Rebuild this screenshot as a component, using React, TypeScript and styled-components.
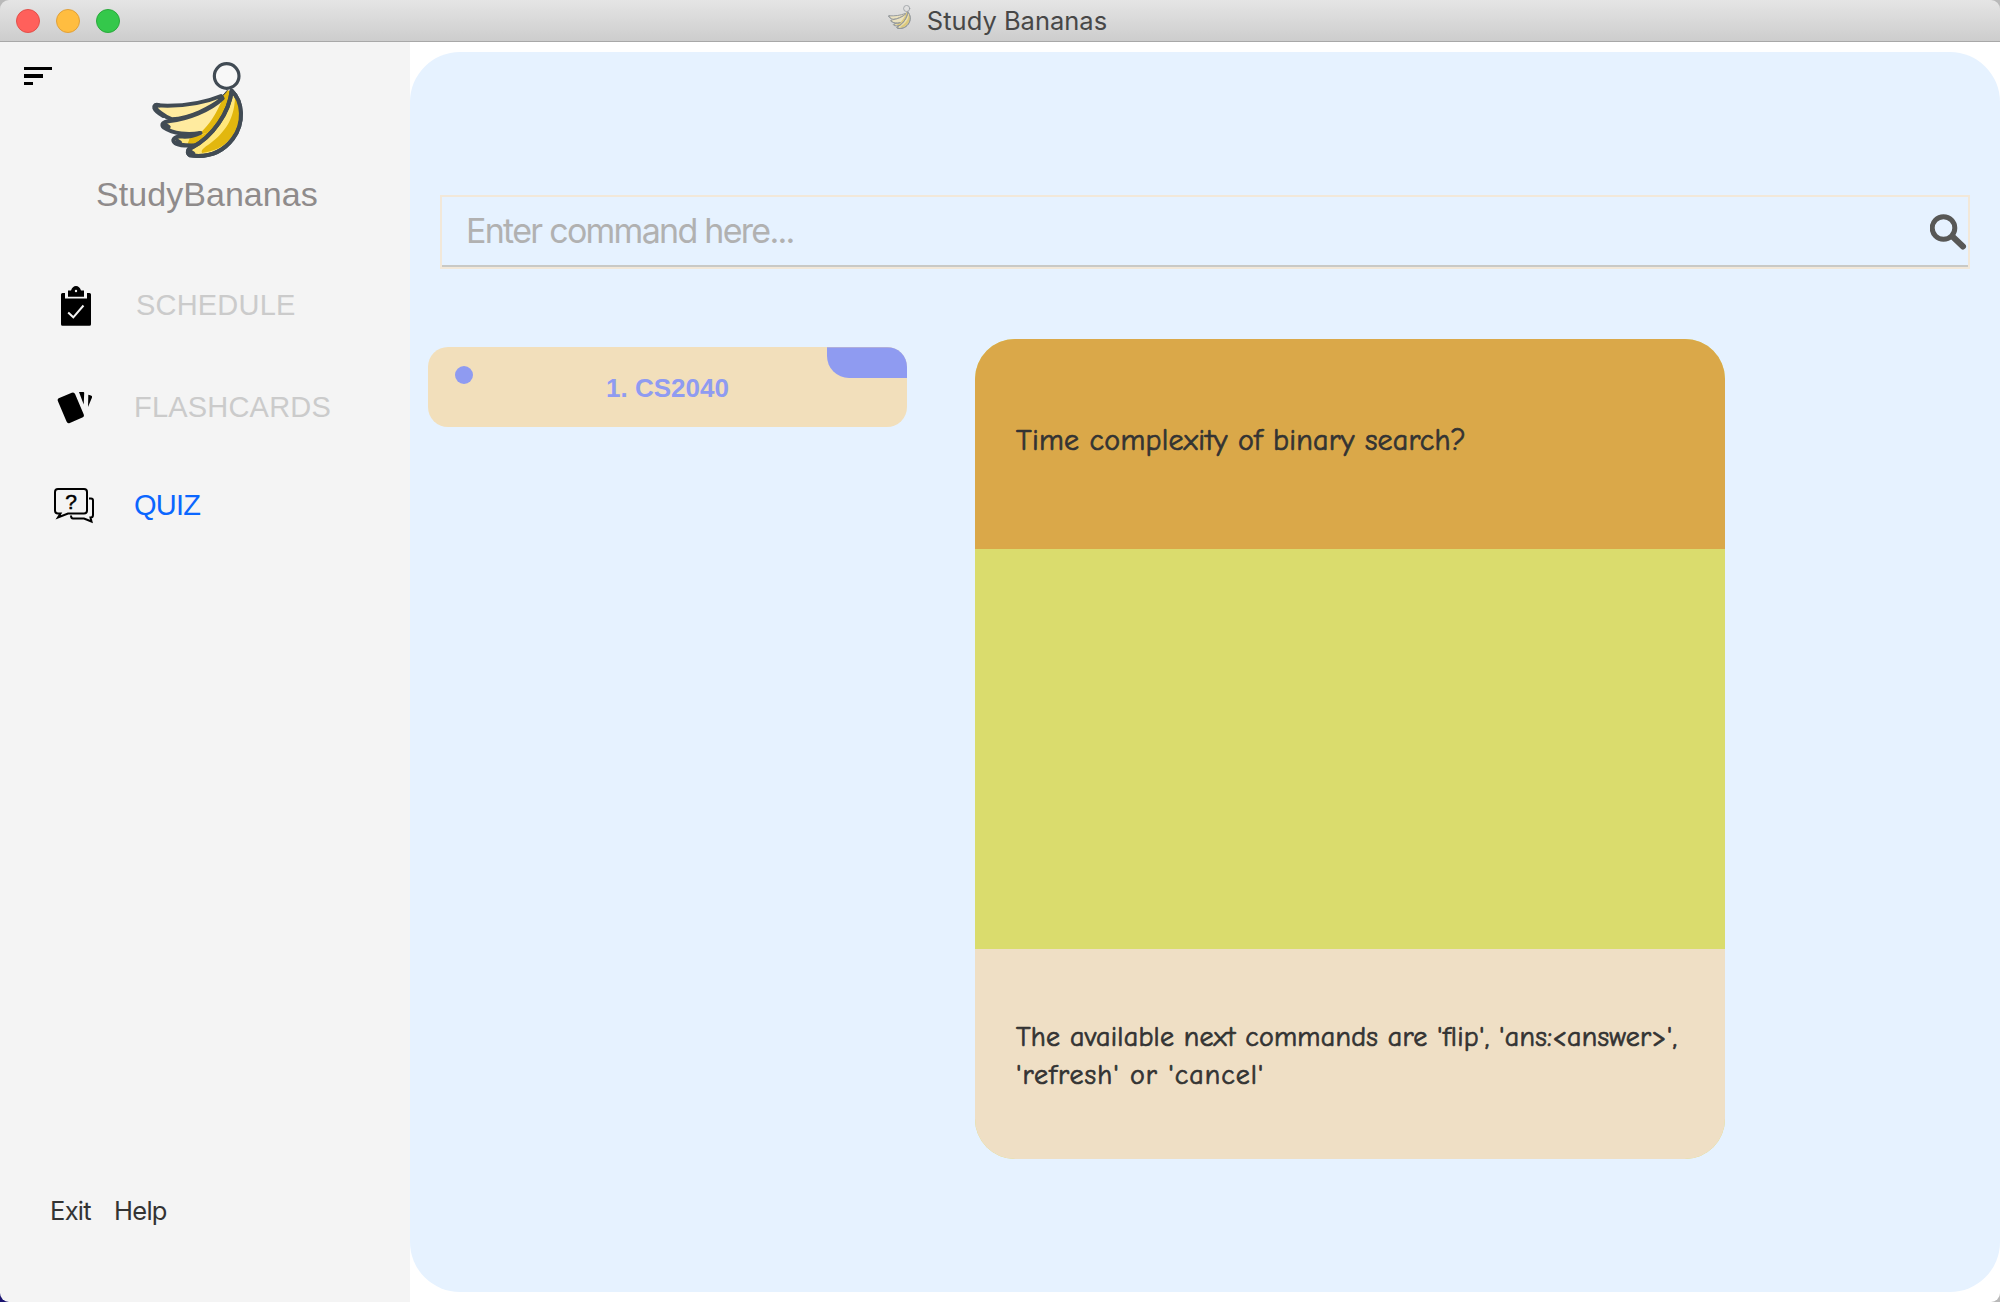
import React from 'react';
import styled, { createGlobalStyle } from 'styled-components';

const Global = createGlobalStyle`
  * { box-sizing: border-box; }
  body {
    margin: 0;
    background: linear-gradient(to top right, #1b1470 10%, #b9b9b9 20%);
    overflow: hidden;
  }
`;

const Window = styled.div`
  width: 2000px;
  height: 1302px;
  display: flex;
  flex-direction: column;
  overflow: hidden;
  border-radius: 9px;
  font-family: 'Liberation Sans', Arial, sans-serif;
`;

const TitleBar = styled.header`
  height: 42px;
  flex: none;
  display: grid;
  grid-template-columns: 1fr auto 1fr;
  align-items: center;
  background: linear-gradient(#e5e5e5, #cdcdcd);
  border-bottom: 1px solid #a8a8a8;
`;

const Lights = styled.div`
  display: flex;
  gap: 16px;
  padding-left: 16px;
`;

const Light = styled.span<{ $fill: string; $edge: string }>`
  width: 24px;
  height: 24px;
  border-radius: 50%;
  background: ${(p) => p.$fill};
  border: 1px solid ${(p) => p.$edge};
`;

const Title = styled.div`
  display: flex;
  align-items: flex-start;
  gap: 12px;
  height: 41px;
  padding: 2px 8px 0 0;
`;

const TitleText = styled.span`
  font: 400 25.5px/34px Inter, sans-serif;
  padding-top: 2px;
  color: #474747;
`;

const Body = styled.div`
  flex: 1;
  display: flex;
  min-height: 0;
`;

const Sidebar = styled.aside`
  width: 410px;
  background: #f4f4f4;
  display: flex;
  flex-direction: column;
`;

const Brand = styled.div`
  display: grid;
  grid-template-columns: 116px 1fr;
  align-items: start;
  padding: 8px 0 0 24px;
  height: 130px;
`;

const MenuIcon = styled.svg`
  margin-top: 17px;
`;

const BrandName = styled.h1`
  margin: 0;
  padding: 2px 0 0 96px;
  height: 42px;
  font-weight: 400;
  font-size: 34px;
  line-height: 40px;
  letter-spacing: 0.05px;
  color: #8f8b8b;
`;

const Nav = styled.nav`
  display: flex;
  flex-direction: column;
  padding: 70px 0 0 54px;
`;

const NavItem = styled.a<{ $active?: boolean; $height: number; $tracking: number; $indent?: number }>`
  height: ${(p) => p.$height}px;
  display: grid;
  grid-template-columns: ${(p) => 82 - (p.$indent ?? 0)}px 1fr;
  align-items: start;
  font-size: 29px;
  line-height: 43px;
  letter-spacing: ${(p) => p.$tracking}px;
  color: ${(p) => (p.$active ? '#0a66ff' : '#cbcbcb')};
  svg { display: block; }
`;

const NavIcon = styled.svg`
  width: 44px;
  height: 44px;
`;

const IconLabel = styled.text`
  font: 21px 'Liberation Sans', Arial, sans-serif;
  letter-spacing: 0;
`;

const Footer = styled.footer`
  margin-top: auto;
  display: flex;
  gap: 23px;
  padding: 0 0 74px 50px;
  font: 400 25.5px/34px Inter, sans-serif;
  letter-spacing: -0.7px;
  color: #333;
`;

const Content = styled.main`
  flex: 1;
  background: #fff;
  padding: 10px 0;
`;

const Panel = styled.section`
  height: 1240px;
  border-radius: 50px;
  background: #e6f2ff;
  padding-top: 143px;
`;

const SearchBox = styled.div`
  margin: 0 30px;
  height: 74px;
  border: 2px solid #f2e8d9;
  display: flex;
`;

const SearchField = styled.div`
  flex: 1;
  height: 70px;
  border-bottom: 2px solid #c8c9c6;
  display: flex;
  justify-content: space-between;
  padding-left: 24px;
`;

const Placeholder = styled.span`
  font: 400 34px/68px Inter, sans-serif;
  letter-spacing: -1.72px;
  color: #b1b1b1;
`;

const SearchIcon = styled.svg`
  margin: 17px 1px 0 0;
`;

const Columns = styled.div`
  display: flex;
  align-items: flex-start;
  padding: 70px 0 0 18px;
  gap: 68px;
`;

const SetCard = styled.div`
  position: relative;
  width: 479px;
  height: 80px;
  margin-top: 8px;
  border-radius: 20px;
  overflow: hidden;
  background: #f2dfbb;
  color: #8f9bf1;
  text-align: center;
  font-weight: 700;
  font-size: 26px;
  line-height: 82px;
`;

const Dot = styled.i`
  position: absolute;
  left: 27px;
  top: 19px;
  width: 18px;
  height: 18px;
  border-radius: 50%;
  background: #8f9bf1;
`;

const Tab = styled.i`
  position: absolute;
  right: 0;
  top: 0;
  width: 80px;
  height: 30.5px;
  border-radius: 0 0 0 22px;
  background: #8f9bf1;
  border-top: 1px solid #b0aedb;
`;

const FlashCard = styled.article`
  width: 750px;
  border-radius: 40px;
  overflow: hidden;
  background: #dadc6d;
`;

const CardPart = styled.div<{ $tone: string; $height: number; $top?: number }>`
  height: ${(p) => p.$height}px;
  background: ${(p) => p.$tone};
  padding: ${(p) => p.$top ?? 0}px 0 0 41px;
  display: flex;
  flex-direction: column;
  color: #333;
  white-space: nowrap;
  font-family: 'Comic Sans MS', 'Comic Neue', 'Open Sans', sans-serif;
  font-variant-ligatures: none;
  font-feature-settings: 'liga' 0, 'clig' 0, 'calt' 0, 'dlig' 0;
  -webkit-text-stroke: 0.7px #333;
`;

const Line = styled.span<{ $tracking: number; $size: number }>`
  font-size: ${(p) => p.$size}px;
  line-height: 38px;
  letter-spacing: ${(p) => p.$tracking}px;
`;

function Bananas({ size, faded }: { size: number; faded?: boolean }) {
  return (
    <svg width={size} height={size} viewBox="0 0 360 360" opacity={faded ? 0.45 : 1}
      stroke="#414b54" strokeWidth="12" strokeLinejoin="round" strokeLinecap="round">
      <circle cx="260" cy="78" r="37" fill={faded ? 'none' : '#fff'} fillOpacity="0.35" strokeWidth="9.500" />
      <path d="M262 121L242 142L182 158L150 276L205 266L255 190L276 124Z" fill="#e2b70e" stroke="none" />
      <path d="M49 166C120 170 190 160 243 138L248 145C210 175 150 205 96 208C70 199 50 180 44 170Z" fill="#ffeb9f" />
      <path d="M248 145C200 185 150 203 96 211C82 214 64 218 68 228C85 246 140 256 181 249L212 244C238 210 256 171 266 124Z" fill="#e2b70e" stroke="none" />
      <path d="M248 145C200 185 150 203 96 211C82 214 64 218 68 228C85 246 140 256 181 249C207 225 231 190 248 145Z" fill="#ffeb9f" stroke="none" />
      <path d="M248 145C210 182 140 208 90 213C69 215 61 224 72 233C100 252 145 255 181 249" fill="none" />
      <path d="M121 259C101 262 94 270 105 279C116 287 140 286 168 286C187 275 200 260 212 245C180 257 150 258 121 259Z" fill="#ffe77c" stroke="none" />
      <path d="M150 262L190 253L212 244L170 286L142 284Z" fill="#e2b70e" stroke="none" />
      <path d="M121 259C101 262 94 270 105 279C118 288 145 287 173 286M121 259C139 262 163 257 181 249" fill="none" />
      <path d="M275 122C309 155 314 220 278 267C246 309 200 323 150 316C140 310 142 296 155 293C220 260 268 185 275 122Z" fill="#ffe77c" />
      <path d="M285 140C303 175 304 219 277 259C250 295 220 304 186 309C182 300 192 296 198 289C245 257 284 215 285 140Z" fill="#e2b70e" stroke="none" />
      <path d="M275 122C309 155 314 220 278 267C246 309 200 323 150 316C140 310 142 296 155 293C220 260 268 185 275 122Z" fill="none" />
      <path d="M57 166C48 161 42 166 43 174C45 180 60 192 70 198M76 224L86 231M112 272L120 277M152 305L160 310" fill="none" />
      <path d="M262 121L248 137L258 127" fill="none" strokeWidth="3" />
    </svg>
  );
}

export default function App() {
  return (
    <Window>
      <Global />
      <TitleBar>
        <Lights>
          <Light $fill="#ff605b" $edge="#e2504a" />
          <Light $fill="#ffbd40" $edge="#e0a03a" />
          <Light $fill="#34c84b" $edge="#2aa93c" />
        </Lights>
        <Title>
          <Bananas size={30} faded />
          <TitleText>Study Bananas</TitleText>
        </Title>
      </TitleBar>
      <Body>
        <Sidebar>
          <Brand>
            <MenuIcon width="28" height="18">
              <path d="M0 0h28v3H0zM0 7h19v4H0zM0 15h9v3H0z" />
            </MenuIcon>
            <Bananas size={120} />
          </Brand>
          <BrandName>StudyBananas</BrandName>
          <Nav>
            <NavItem $height={102} $tracking={0.2}>
              <NavIcon viewBox="0 0 44 44">
                <path d="M11 9H8.500Q7 9 7 10.500V40.200Q7 41.700 8.500 41.700H35.500Q37 41.700 37 40.200V10.500Q37 9 35.500 9H33V14.500H11z" />
                <path d="M14 12.700V6.500H17Q18.500 2 22 2T27 6.500H30V12.700z" />
                <circle cx="22" cy="7" r="1.200" fill="#f4f4f4" />
                <path d="M14.200 28.500L19.300 33.300L29.500 21.500" fill="none" stroke="#f4f4f4" strokeWidth="2" />
              </NavIcon>
              <span>SCHEDULE</span>
            </NavItem>
            <NavItem $height={98} $tracking={0.2} $indent={2}>
              <NavIcon viewBox="0 0 44 44">
                <rect x="7.500" y="8.300" width="18.600" height="27" rx="2.500" transform="rotate(-23 16.800 21.800)" />
                <path d="M25 6H29.300Q30.300 6 30.200 7L29.700 18.500zM34.300 8.700L37 9.500Q38.500 10 38 11.500L34 21z" />
              </NavIcon>
              <span>FLASHCARDS</span>
            </NavItem>
            <NavItem $height={60} $tracking={-0.8} $indent={2} $active>
              <NavIcon viewBox="0 0 44 44" fill="none" stroke="#000" strokeWidth="2">
                <path d="M4 29.500Q1 29.500 1 26.500V8Q1 5 4 5H30Q33 5 33 8V26.500Q33 29.500 30 29.500H14L4 33.500L6.500 29.500z" />
                <path d="M35 14.500H37Q39 14.500 39 16.500V31Q39 33.500 36.500 33.500L37.500 37.500L30 34.500H19Q17 34.500 17 31.500" />
                <IconLabel x="17" y="25" textAnchor="middle" fill="#000" stroke="#000" strokeWidth="0.5">?</IconLabel>
              </NavIcon>
              <span>QUIZ</span>
            </NavItem>
          </Nav>
          <Footer>
            <span>Exit</span>
            <span>Help</span>
          </Footer>
        </Sidebar>
        <Content>
          <Panel>
            <SearchBox>
              <SearchField>
                <Placeholder>Enter command here...</Placeholder>
                <SearchIcon width="37" height="37" fill="none" stroke="#585856">
                  <circle cx="13.500" cy="14" r="11.300" strokeWidth="5" />
                  <path d="M22.500 22.500L33 32.500" strokeWidth="6" strokeLinecap="round" />
                </SearchIcon>
              </SearchField>
            </SearchBox>
            <Columns>
              <SetCard>
                <Dot />
                1. CS2040
                <Tab />
              </SetCard>
              <FlashCard>
                <CardPart $tone="#daa849" $height={210} $top={83}>
                  <Line $size={30} $tracking={0.25}>Time complexity of binary search?</Line>
                </CardPart>
                <CardPart $tone="#dadc6d" $height={400} />
                <CardPart $tone="#efdfc5" $height={210} $top={69}>
                  <Line $size={28} $tracking={0.24}>The available next commands are 'flip', 'ans:&lt;answer&gt;',</Line>
                  <Line $size={28} $tracking={1}>'refresh' or 'cancel'</Line>
                </CardPart>
              </FlashCard>
            </Columns>
          </Panel>
        </Content>
      </Body>
    </Window>
  );
}
